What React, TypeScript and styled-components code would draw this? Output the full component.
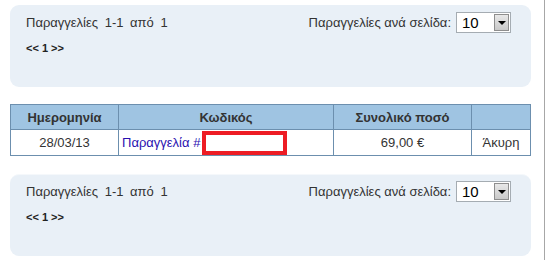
import React from "react";
import styled, { createGlobalStyle } from "styled-components";

const GlobalStyle = createGlobalStyle`
  body {
    margin: 0;
    font-family: "Liberation Sans", Arial, sans-serif;
    color: #333;
    background: #fff;
  }
`;

const Page = styled.div`
  width: 545px;
  height: 260px;
  border-right: 1px solid #a7a7a7;
  padding: 5px 0 0 10px;
  box-sizing: border-box;
`;

const Pager = styled.div<{ $top?: boolean }>`
  width: 521px;
  height: 82px;
  box-sizing: border-box;
  background: #e9f0f7;
  border-radius: 9px;
  padding: ${({ $top }) => ($top ? "7px 20px 0 16px" : "6px 20px 0 16px")};
  border-top: ${({ $top }) => ($top ? "none" : "1px solid #f5f8fb")};
`;

const PagerRow = styled.div`
  display: flex;
  justify-content: space-between;
  align-items: center;
`;

const Summary = styled.span`
  font-size: 13px;
  word-spacing: 3px;
`;

const PerPage = styled.label`
  display: flex;
  align-items: center;
  gap: 5px;
  font-size: 13px;
`;

const Select = styled.div`
  width: 48px;
  height: 19px;
  border: 1px solid #a5acb2;
  background: #fff;
  display: flex;
  align-items: center;
  justify-content: space-between;
  font-size: 15px;
  color: #000;
  padding-left: 5px;
`;

const Arrow = styled.span`
  width: 15px;
  height: 17px;
  margin-right: 1px;
  box-sizing: border-box;
  border: 1px solid #8e8e8e;
  background: linear-gradient(#e8e8e8, #c9c9c9);
  display: flex;
  align-items: center;
  justify-content: center;
  &::after {
    content: "";
    border-left: 4px solid transparent;
    border-right: 4px solid transparent;
    border-top: 4px solid #000;
  }
`;

const Pages = styled.div`
  margin-top: 9px;
  font-size: 11px;
  font-weight: bold;
  color: #222;
`;

const Table = styled.table`
  width: 521px;
  margin: 17px 0 18px;
  border-collapse: collapse;
  font-size: 13px;
`;

const Th = styled.th<{ $w?: number }>`
  background: #9fc4e2;
  border: 1px solid #6c8fae;
  height: 24px;
  padding: 0;
  font-weight: bold;
  color: #333;
  width: ${({ $w }) => ($w ? `${$w}px` : "auto")};
`;

const Td = styled.td<{ $align?: string }>`
  border: 1px solid #6c8fae;
  height: 25px;
  padding: 0 3px;
  text-align: ${({ $align }) => $align || "center"};
  color: #333;
`;

const OrderLink = styled.a`
  color: #2a10b0;
  text-decoration: none;
  display: flex;
  align-items: center;
`;

const Hidden = styled.span`
  display: inline-block;
  width: 77px;
  height: 16px;
  border: 4px solid #ed1c24;
  margin-left: 2px;
`;

function PagerBox({ top }: { top?: boolean }) {
  return (
    <Pager $top={top}>
      <PagerRow>
        <Summary>Παραγγελίες 1-1 από 1</Summary>
        <PerPage>
          Παραγγελίες ανά σελίδα:
          <Select>
            10
            <Arrow />
          </Select>
        </PerPage>
      </PagerRow>
      <Pages>&lt;&lt; 1 &gt;&gt;</Pages>
    </Pager>
  );
}

export default function App() {
  return (
    <Page>
      <GlobalStyle />
      <PagerBox top />
      <Table>
        <thead>
          <tr>
            <Th $w={107}>Ημερομηνία</Th>
            <Th $w={214}>Κωδικός</Th>
            <Th $w={137}>Συνολικό ποσό</Th>
            <Th />
          </tr>
        </thead>
        <tbody>
          <tr>
            <Td>28/03/13</Td>
            <Td $align="left">
              <OrderLink href="#">
                Παραγγελία #<Hidden />
              </OrderLink>
            </Td>
            <Td>69,00 €</Td>
            <Td>Άκυρη</Td>
          </tr>
        </tbody>
      </Table>
      <PagerBox />
    </Page>
  );
}
